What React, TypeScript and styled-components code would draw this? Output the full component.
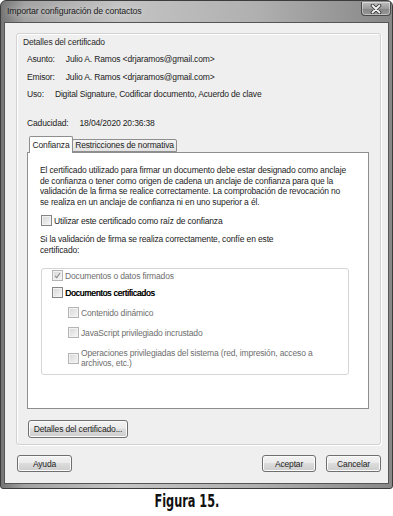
import React from 'react'
import styled, { createGlobalStyle } from 'styled-components'

const GlobalStyle = createGlobalStyle`
  html, body {
    margin: 0;
    padding: 0;
    background: #fff;
  }
  body {
    font-family: 'Liberation Sans', Arial, sans-serif;
    font-size: 8.5px;
    letter-spacing: -0.15px;
    color: #1c1c1c;
  }
`

const Page = styled.div`
  width: 393px;
  height: 516px;
  display: flex;
  flex-direction: column;
  overflow: hidden;
`

const Window = styled.div`
  width: 393px;
  height: 489px;
  box-sizing: border-box;
  border: 1px solid #3c3c3c;
  border-radius: 6px 6px 3px 3px;
  background: linear-gradient(to right, #747474, #a2a2a2 6%, #c4c4c4 30%, #b0b0b0 65%, #878787);
  display: flex;
  flex-direction: column;
  padding: 0 3px 4px;
`

const TitleBar = styled.div`
  height: 21px;
  display: flex;
  align-items: flex-start;
`

const Title = styled.div`
  padding-left: 3px;
  line-height: 21px;
  font-size: 8.8px;
  color: #1e1e1e;
  text-shadow: 0 0 6px rgba(255, 255, 255, 0.7);
`

const CloseButton = styled.div`
  margin-left: auto;
  margin-right: -2px;
  margin-top: 1px;
  width: 30px;
  height: 14px;
  box-sizing: border-box;
  border: 1px solid #4a4a4a;
  border-top: none;
  border-radius: 0 0 4px 4px;
  background: linear-gradient(#bdbdbd, #9c9c9c 50%, #868686 51%, #979797);
  box-shadow: inset 0 0 0 1px rgba(255, 255, 255, 0.4);
  display: flex;
  align-items: center;
  justify-content: center;
`

const ClientArea = styled.div`
  flex: 1;
  background: #efefef;
  border: 1px solid #555;
  padding: 10px 7px 0 11px;
  display: flex;
  flex-direction: column;
`

const GroupBox = styled.div`
  border: 1px solid #d2d2d2;
  border-radius: 3px;
  box-shadow: inset 1px 1px 0 #fff, 1px 1px 0 #fff;
  padding: 2px 11px 6px 10px;
  display: flex;
  flex-direction: column;
`

const Legend = styled.div`
  margin-left: -4px;
  line-height: 12px;
  color: #2a2a2a;
`

const InfoList = styled.div`
  margin-top: 5px;
  display: flex;
  flex-direction: column;
  gap: 5.5px;
`

const InfoRow = styled.div<{ $spaced?: boolean }>`
  display: flex;
  gap: 11px;
  line-height: 12px;
  margin-top: ${({ $spaced }) => ($spaced ? '11.5px' : '0')};
`

const TabStrip = styled.div`
  margin-top: 7px;
  height: 16px;
  padding-left: 2px;
  display: flex;
  align-items: flex-end;
  position: relative;
  z-index: 1;
`

const Tab = styled.div<{ $active?: boolean; $width: number }>`
  width: ${({ $width }) => $width}px;
  height: ${({ $active }) => ($active ? 17 : 13)}px;
  margin-bottom: ${({ $active }) => ($active ? -1 : 0)}px;
  margin-left: ${({ $active }) => ($active ? 0 : -1)}px;
  box-sizing: border-box;
  border: 1px solid #8e8e8e;
  border-bottom: ${({ $active }) => ($active ? 'none' : '1px solid #8e8e8e')};
  border-radius: 2px 2px 0 0;
  background: ${({ $active }) => ($active ? '#fff' : 'linear-gradient(#f4f4f4, #e2e2e2)')};
  display: flex;
  align-items: center;
  justify-content: center;
  line-height: 11px;
`

const Panel = styled.div`
  height: 257px;
  box-sizing: border-box;
  background: #fff;
  border: 1px solid #8e8e8e;
  padding: 12px 12px 0 12px;
  display: flex;
  flex-direction: column;
`

const Paragraph = styled.p<{ $top?: number }>`
  margin: ${({ $top }) => $top ?? 0}px 0 0;
  line-height: 10.7px;
`

const CheckRow = styled.div<{ $top?: number; $indent?: number; $muted?: boolean; $strong?: boolean }>`
  display: flex;
  align-items: center;
  gap: 2px;
  line-height: 12px;
  margin-top: ${({ $top }) => $top ?? 0}px;
  margin-left: ${({ $indent }) => $indent ?? 0}px;
  color: ${({ $muted, $strong }) => ($muted ? '#6e6e6e' : $strong ? '#000' : '#1a1a1a')};
  text-shadow: ${({ $strong }) => ($strong ? '0.4px 0 0 #000' : 'none')};
`

const RowText = styled.span`
  line-height: 10.5px;
`

const Box = styled.span<{ $disabled?: boolean }>`
  flex: none;
  width: 9px;
  height: 9px;
  border: 1px solid ${({ $disabled }) => ($disabled ? '#b4b4b4' : '#858585')};
  background: linear-gradient(135deg, #d6d6d6, #f7f7f7);
  box-shadow: inset 0 0 0 1px #f2f2f2;
  display: flex;
  align-items: center;
  justify-content: center;
`

const InnerGroup = styled.div`
  margin-top: 12px;
  margin-left: 1px;
  width: 308px;
  box-sizing: border-box;
  border: 1px solid #d5d5d5;
  border-radius: 3px;
  padding: 1px 0 5px 10px;
  display: flex;
  flex-direction: column;
`

const Button = styled.div<{ $width: number; $height?: number }>`
  width: ${({ $width }) => $width}px;
  height: ${({ $height }) => $height ?? 17}px;
  box-sizing: border-box;
  border: 1px solid #6f6f6f;
  border-radius: 3px;
  background: linear-gradient(#f3f3f3 0%, #ebebeb 45%, #dcdcdc 50%, #cdcdcd 100%);
  box-shadow: inset 0 0 0 1px #fbfbfb;
  display: flex;
  align-items: center;
  justify-content: center;
  color: #1e1e1e;
`

const DetailsRow = styled.div`
  margin-top: 11px;
  margin-left: 1px;
  display: flex;
`

const Footer = styled.div`
  margin-top: 10px;
  padding-left: 1px;
  display: flex;
  gap: 10px;
`

const Spacer = styled.div`
  flex: 1;
`

const Caption = styled.div`
  padding: 2px 20px 0 0;
  text-align: center;
  line-height: 20px;
`

const CaptionText = styled.span`
  display: inline-block;
  font-family: 'DejaVu Sans Condensed', 'Liberation Sans', sans-serif;
  font-weight: bold;
  font-size: 17px;
  letter-spacing: 0;
  color: #111;
  transform: scaleX(0.74);
`

const CloseIcon = () => (
  <svg width="12" height="10" viewBox="0 0 12 10">
    <path d="M2.5 1.5 L9.5 8.5 M9.5 1.5 L2.5 8.5" stroke="#3a3a3a" strokeWidth="3.6" strokeLinecap="round" />
    <path d="M2.5 1.5 L9.5 8.5 M9.5 1.5 L2.5 8.5" stroke="#f4f4f4" strokeWidth="1.8" strokeLinecap="round" />
  </svg>
)

const Check = ({ checked, disabled }: { checked?: boolean; disabled?: boolean }) => (
  <Box $disabled={disabled}>
    {checked && (
      <svg width="7" height="7" viewBox="0 0 7 7">
        <path d="M1 3.8 L2.8 5.6 L6 1" fill="none" stroke="#8a8a8a" strokeWidth="1.1" />
      </svg>
    )}
  </Box>
)

const App = (): JSX.Element => {
  return (
    <Page>
      <GlobalStyle />
      <Window>
        <TitleBar>
          <Title>Importar configuración de contactos</Title>
          <CloseButton>
            <CloseIcon />
          </CloseButton>
        </TitleBar>
        <ClientArea>
          <GroupBox>
            <Legend>Detalles del certificado</Legend>
            <InfoList>
              <InfoRow>
                <span>Asunto:</span>
                <span>Julio A. Ramos &lt;drjaramos@gmail.com&gt;</span>
              </InfoRow>
              <InfoRow>
                <span>Emisor:</span>
                <span>Julio A. Ramos &lt;drjaramos@gmail.com&gt;</span>
              </InfoRow>
              <InfoRow>
                <span>Uso:</span>
                <span>Digital Signature, Codificar documento, Acuerdo de clave</span>
              </InfoRow>
              <InfoRow $spaced>
                <span>Caducidad:</span>
                <span>18/04/2020 20:36:38</span>
              </InfoRow>
            </InfoList>
            <TabStrip>
              <Tab $active $width={44}>Confianza</Tab>
              <Tab $width={105}>Restricciones de normativa</Tab>
            </TabStrip>
            <Panel>
              <Paragraph>
                El certificado utilizado para firmar un documento debe estar designado como anclaje
                <br />
                de confianza o tener como origen de cadena un anclaje de confianza para que la
                <br />
                validación de la firma se realice correctamente. La comprobación de revocación no
                <br />
                se realiza en un anclaje de confianza ni en uno superior a él.
              </Paragraph>
              <CheckRow $top={7} $indent={1}>
                <Check />
                <span>Utilizar este certificado como raíz de confianza</span>
              </CheckRow>
              <Paragraph $top={7.5}>
                Si la validación de firma se realiza correctamente, confíe en este
                <br />
                certificado:
              </Paragraph>
              <InnerGroup>
                <CheckRow $muted>
                  <Check checked disabled />
                  <span>Documentos o datos firmados</span>
                </CheckRow>
                <CheckRow $top={5} $strong>
                  <Check />
                  <span>Documentos certificados</span>
                </CheckRow>
                <CheckRow $top={8} $indent={16} $muted>
                  <Check disabled />
                  <span>Contenido dinámico</span>
                </CheckRow>
                <CheckRow $top={8} $indent={16} $muted>
                  <Check disabled />
                  <span>JavaScript privilegiado incrustado</span>
                </CheckRow>
                <CheckRow $top={9} $indent={16} $muted>
                  <Check disabled />
                  <RowText>
                    Operaciones privilegiadas del sistema (red, impresión, acceso a
                    <br />
                    archivos, etc.)
                  </RowText>
                </CheckRow>
              </InnerGroup>
            </Panel>
            <DetailsRow>
              <Button $width={100} $height={18}>Detalles del certificado...</Button>
            </DetailsRow>
          </GroupBox>
          <Footer>
            <Button $width={55}>Ayuda</Button>
            <Spacer />
            <Button $width={54}>Aceptar</Button>
            <Button $width={55}>Cancelar</Button>
          </Footer>
        </ClientArea>
      </Window>
      <Caption>
        <CaptionText>Figura 15.</CaptionText>
      </Caption>
    </Page>
  )
}

export default App
